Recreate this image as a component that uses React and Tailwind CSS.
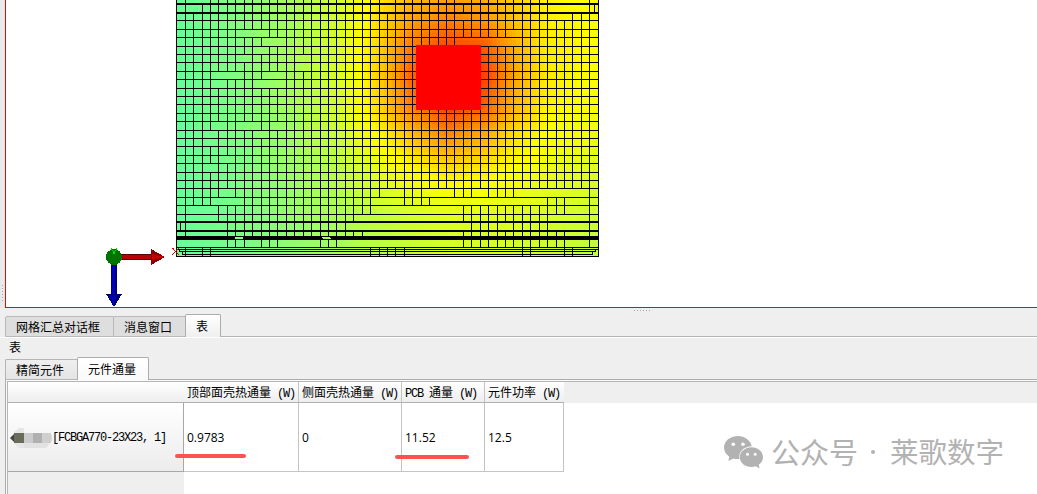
import React from "react";

const XS = [176, 185, 193, 202, 210, 218, 227, 235, 244, 252, 261, 269, 277, 286, 294, 303, 311, 320, 328, 336, 345, 353, 362, 370, 379, 387, 395, 404, 412, 421, 429, 438, 446, 454, 463, 471, 480, 488, 497, 505, 513, 522, 530, 539, 547, 556, 564, 572, 581, 589, 598];

const range = (a, b) => Array.from({ length: b - a + 1 }, (_, i) => a + i);
const without = (...gone) => range(1, 49).filter((i) => !gone.includes(i));

// Each band of the mesh: top, bottom, and the vertical grid lines it contains
const BANDS = [
  [0, 3, without(2, 3, 25, 34, 45, 46, 47, 48)],
  [4, 12, without(2, 25, 45, 46, 47, 48)],
  [13, 20, without(34, 45, 46)],
  [20, 29, without()],
  [29, 37, without(8, 9, 10, 40)],
  [37, 46, without(11, 12, 34, 35, 36, 37, 38, 39, 40)],
  [46, 54, without(10)],
  [54, 62, without(8, 15)],
  [62, 71, without(15)],
  [71, 79, without(5, 6, 7, 11, 12)],
  [79, 88, without(5, 10, 11, 12)],
  [88, 96, without()],
  [96, 104, without()],
  [104, 113, without()],
  [113, 121, without()],
  [121, 130, without(5, 8, 9, 12)],
  [130, 138, without(4, 10)],
  [138, 146, without(4)],
  [146, 155, without()],
  [155, 163, without(6)],
  [163, 172, without(4)],
  [172, 180, without()],
  [180, 188, without()],
  [188, 197, [...range(1, 5), ...range(7, 24), 27, 28, 29, 33, 34, 35, 37, 38, 39, 40, 49]],
  [197, 205, [...range(1, 4), ...range(8, 23), 27, 28, 29, 30, 44, 45, 46, 49]],
  [205, 214, [1, ...range(5, 23), ...range(34, 46), 49]],
  [214, 222, [1, ...range(5, 21), ...range(34, 44), 49]],
  [222, 231, [1, ...range(6, 20), 35, 36, 37, 38, 40, 41, 42, 43, 44, 49]],
  [231, 237, [1, ...range(6, 22), ...range(34, 46), 49]],
  [239, 247, [6, 7, 8, 10, 11, 12, 17, 18, 19, ...range(34, 46), 49]],
  [247, 256, [1, 3, 4, 23, 24, 25, 26, 27, 41, 42, 46, 47]],
];

const HLINES = [
  [3, 2], [12, 2], [20, 1], [29, 1], [37, 1], [46, 1], [54, 1], [62, 1], [71, 1], [79, 1], [88, 1], [96, 1], [104, 1], [113, 1], [121, 1],
  [130, 1], [138, 1], [146, 1], [155, 1], [163, 1], [172, 1], [180, 1], [188, 1], [197, 1], [205, 1], [214, 1], [221, 2], [230, 2], [236, 4], [247, 1], [256, 1],
];

// Sampled temperature field: 0 green, 1 yellow, 2 red
const FX = [176, 235, 290, 340, 362, 387, 410, 448, 485, 500, 520, 545, 598];
const FY = [0, 20, 45, 77, 110, 135, 180, 220, 257];
const FIELD = [
  [0, 0.18, 0.42, 0.72, 0.95, 1.15, 1.27, 1.37, 1.33, 1.25, 1.16, 1.04, 0.95],
  [0, 0.18, 0.42, 0.74, 0.98, 1.2, 1.36, 1.5, 1.4, 1.32, 1.21, 1.07, 0.97],
  [0, 0.17, 0.42, 0.77, 1, 1.26, 1.5, 1.72, 1.64, 1.46, 1.27, 1.08, 0.98],
  [0, 0.17, 0.42, 0.77, 1, 1.28, 1.6, 1.85, 1.75, 1.54, 1.3, 1.09, 0.97],
  [0, 0.16, 0.39, 0.74, 0.98, 1.22, 1.46, 1.75, 1.6, 1.42, 1.23, 1.05, 0.94],
  [0, 0.15, 0.37, 0.67, 0.9, 1.08, 1.24, 1.46, 1.32, 1.21, 1.1, 1, 0.88],
  [0, 0.13, 0.34, 0.54, 0.7, 0.83, 0.94, 1.03, 1.01, 0.98, 0.94, 0.86, 0.75],
  [0, 0.12, 0.3, 0.46, 0.55, 0.63, 0.7, 0.78, 0.8, 0.79, 0.77, 0.74, 0.68],
  [0, 0.1, 0.26, 0.41, 0.5, 0.56, 0.63, 0.69, 0.71, 0.71, 0.69, 0.66, 0.56],
];

function locate(list, v) {
  let i = 0;
  while (i < list.length - 2 && v > list[i + 1]) i++;
  return [i, Math.min(1, Math.max(0, (v - list[i]) / (list[i + 1] - list[i])))];
}

function heat(x, y) {
  const [i, u] = locate(FX, x);
  const [j, v] = locate(FY, y);
  const a = FIELD[j][i] * (1 - u) + FIELD[j][i + 1] * u;
  const b = FIELD[j + 1][i] * (1 - u) + FIELD[j + 1][i + 1] * u;
  const t = a * (1 - v) + b * v;
  if (t <= 1) return `rgb(${Math.round(100 + 155 * t)},255,${Math.round(155 - 155 * t)})`;
  return `rgb(255,${Math.round(255 * (2 - t))},0)`;
}

const TILES = [];
for (let y = 0; y < 257; y += 4) {
  for (let x = 176; x < 599; x += 4) {
    TILES.push([x, y, Math.min(4, 599 - x), Math.min(4, 257 - y), heat(x + 2, y + 2)]);
  }
}

function ThermalPlot() {
  return (
    <svg className="block" width="1031" height="307" viewBox="6 0 1031 307" shapeRendering="crispEdges">
      {TILES.map(([x, y, w, h, c]) => (
        <rect key={`${x}-${y}`} x={x} y={y} width={w} height={h} fill={c} />
      ))}
      <g fill="#000">
        {HLINES.map(([y, h]) => (
          <rect key={y} x="176" y={y} width="423" height={h} />
        ))}
        {BANDS.map(([y0, y1, lines]) =>
          lines.map((i) => <rect key={`${y0}-${i}`} x={XS[i]} y={y0} width="1" height={y1 - y0} />)
        )}
        <rect x="176" y="0" width="1" height="257" />
        <rect x="598" y="0" width="1" height="257" />
        <rect x="594" y="4" width="1" height="9" />
        <rect x="180" y="222" width="1" height="9" />
        <rect x="177" y="249" width="421" height="1" />
        <rect x="179" y="251" width="416" height="1" />
        <rect x="182" y="254" width="410" height="1" />
        <rect x="179" y="249" width="1" height="3" />
        <rect x="182" y="251" width="1" height="4" />
        <rect x="595" y="249" width="1" height="3" />
        <rect x="592" y="251" width="1" height="4" />
      </g>
      <rect x="235" y="237" width="8" height="2" fill="#85ff7c" />
      <path d="M322 237h8v1h1v1h-8v-1h-1z" fill="#a4ff5a" />
      <rect x="416" y="45" width="65" height="65" fill="#f00" />

      <g>
        <rect x="120" y="254" width="32" height="6" fill="#5d0000" />
        <rect x="120" y="255" width="32" height="4" fill="#b80000" />
        <path d="M151 249l14 8-14 8z" fill="#8b0000" />
        <path d="M152 254l13 3-13 3z" fill="#c30000" />
        <rect x="111" y="263" width="6" height="32" fill="#00006e" />
        <rect x="112" y="263" width="3" height="32" fill="#0000c0" />
        <path d="M106 294h16l-8 13z" fill="#00006e" />
        <path d="M109 295h8l-3 12z" fill="#0000b4" />
        <circle cx="114" cy="257" r="8" fill="#007300" />
        <g fill="#00d800">
          <path d="M111 248h1v2h-1zM112 250h1v1h-1zM113 251h2v3h-2zM115 250h1v1h-1zM116 248h1v2h-1z" />
        </g>
        <path
          d="M172 248h2v1h-2zM178 248h1v1h-1zM173 249h1v1h-1zM177 249h1v1h-1zM174 250h1v1h-1zM176 250h1v1h-1zM175 251h1v1h-1zM174 252h1v1h-1zM176 252h1v1h-1zM173 253h1v1h-1zM177 253h1v1h-1zM172 254h1v1h-1zM178 254h1v1h-1z"
          fill="#e00000"
        />
      </g>
    </svg>
  );
}

function Mono({ children }) {
  return <span className="font-['Liberation_Mono',monospace] text-[12px] tracking-[-1.2px] whitespace-pre">{children}</span>;
}

function Head({ className, label, prefix = "" }) {
  return (
    <div className={`flex h-full items-center border-r pt-[2px] pl-[3px] ${className}`}>
      <span className="whitespace-pre">
        <Mono>{prefix}</Mono>
        {label}
        <Mono>{" (W)"}</Mono>
      </span>
    </div>
  );
}

function Cell({ className, children }) {
  return (
    <div className={`flex h-full items-center border-r border-b border-[#c4c4c4] pt-[2px] pl-[3px] font-['Open_Sans',sans-serif] text-[12px] ${className}`}>
      {children}
    </div>
  );
}

function WeChatIcon() {
  return (
    <svg className="mt-[1px] block shrink-0" width="40" height="33" viewBox="0 0 40 33">
      <path fill="#b2b2b2" d="M14 0C6.300 0 0 5.100 0 11.600c0 3.700 2.100 7 5.300 9.100L4.400 25l4.900-2.600c1.900.6 4 .8 6.200.6C14 16 19.500 10.500 27.700 10.200 26.500 4.300 20.800 0 14 0z" />
      <path fill="#b2b2b2" d="M27.500 11.300c-6.500 0-11.700 4.400-11.700 9.900s5.200 9.800 11.700 9.800c1.600 0 3-.2 4.300-.7l3.700 2.200-.8-3.700c2.700-1.800 4.300-4.500 4.300-7.600 0-5.500-5-9.900-11.500-9.900z" />
      <g fill="#fff">
        <circle cx="9.300" cy="8.300" r="1.800" />
        <circle cx="19" cy="8.300" r="1.800" />
        <circle cx="23.500" cy="18.200" r="1.500" />
        <circle cx="31.200" cy="18.200" r="1.500" />
      </g>
    </svg>
  );
}

export default function App() {
  return (
    <div className="relative flex h-[494px] w-[1037px] flex-col overflow-hidden bg-[#efefef] font-['Noto_Sans_CJK_SC',sans-serif] text-[12px] leading-[16px] text-black">
      <div className="flex h-[308px] shrink-0">
        <div className="flex w-[5px] items-end bg-gradient-to-r from-[#e7e7e7] to-[#efefef] pb-[7px] pl-[2px]">
          <div className="flex flex-col gap-[2px]">
            {range(1, 6).map((i) => (
              <i key={i} className="size-px bg-[#a8a8a8]" />
            ))}
          </div>
        </div>
        <div className="w-[1032px] border-b border-l border-[#ff0000] bg-white">
          <ThermalPlot />
        </div>
      </div>

      <div className="flex h-[6px] shrink-0 gap-[2px] pt-[2px] pl-[634px]">
        {range(1, 6).map((i) => (
          <i key={i} className="size-px bg-[#a8a8a8]" />
        ))}
      </div>

      <div className="flex h-[23px] shrink-0 items-end pl-[5px]">
        <div className="flex h-[21px] w-[109px] items-center rounded-tl-[2px] border border-[#b9b9b9] bg-[#dedede] pl-[10px]">网格汇总对话框</div>
        <div className="flex h-[21px] w-[71px] items-center border-t border-b border-[#b9b9b9] bg-[#dedede] pl-[10px]">消息窗口</div>
        <div className="flex h-[23px] w-[36px] items-center rounded-t-[2px] border border-b-0 border-[#acacac] bg-gradient-to-b from-white to-[#efefef] pl-[10px]">表</div>
        <div className="h-px flex-1 bg-[#b5b5b5]" />
      </div>
      <div className="flex h-[20px] shrink-0 items-center border-t border-white pb-[2px] pl-[9px]">表</div>

      <div className="flex h-[23px] shrink-0 items-end pl-[5px]">
        <div className="flex h-[21px] w-[72px] items-center rounded-tl-[2px] border border-r-0 border-[#b5b5b5] bg-gradient-to-b from-[#efefef] to-[#e4e4e4] pl-[10px]">精简元件</div>
        <div className="flex h-[23px] w-[72px] items-center rounded-t-[2px] border border-b-0 border-[#acacac] bg-gradient-to-b from-white to-[#fafafa] pl-[10px]">元件通量</div>
        <div className="h-px flex-1 bg-[#acacac]" />
      </div>

      <div className="ml-[5px] flex flex-1 flex-col border-l border-[#acacac] bg-[#fafafa] pt-[1px] pl-[1px]">
        <div className="flex flex-1 flex-col border-t border-l border-[#b5b5b5] bg-white">
          <div className="flex h-[21px] shrink-0 bg-[#efefef]">
            <div className="flex w-[556px] border-b border-[#b0b0b0] bg-gradient-to-b from-white to-[#eeeeee]">
              <div className="w-[176px]" />
              <Head className="w-[115px] border-[#c4c4c4]" label="顶部面壳热通量" />
              <Head className="w-[103px] border-[#c4c4c4]" label="侧面壳热通量" />
              <Head className="w-[83px] border-[#c4c4c4]" prefix="PCB " label="通量" />
              <Head className="w-[79px] border-transparent" label="元件功率" />
            </div>
          </div>
          <div className="flex h-[69px] shrink-0">
            <div className="flex h-full w-[176px] items-center border-r border-b border-[#a8a8a8] bg-gradient-to-b from-white to-[#ececec] pt-[2px] pl-[2px]">
              <svg className="shrink-0" width="42" height="22" viewBox="0 0 42 22">
                <path d="M4 5l5-4h5v20H9l-5-5z" fill="#e6e6e6" />
                <path d="M14 15h27l-5 6H14z" fill="#e2e2e2" />
                <path d="M0 11l4-4v8z" fill="#444" />
                <g shapeRendering="crispEdges">
                  <rect x="4" y="6" width="10" height="10" fill="#696b5b" />
                  <rect x="14" y="6" width="9" height="10" fill="#cbcbcb" />
                  <rect x="23" y="6" width="9" height="10" fill="#b0b0b0" />
                  <rect x="32" y="6" width="9" height="10" fill="#cfcfcf" />
                  <rect x="41" y="8" width="1" height="6" fill="#d8d8d8" />
                </g>
              </svg>
              <Mono>[FCBGA770-23X23, 1]</Mono>
            </div>
            <Cell className="w-[115px]">0.9783</Cell>
            <Cell className="w-[103px]">0</Cell>
            <Cell className="w-[83px]">11.52</Cell>
            <Cell className="w-[79px]">12.5</Cell>
          </div>
          <div className="w-[176px] flex-1 bg-[#efefef]" />
        </div>
      </div>

      <div className="absolute top-[454px] left-[175px] h-[4px] w-[71px] rounded-full bg-[#fe5151]" />
      <div className="absolute top-[455px] left-[395px] h-[4px] w-[74px] rounded-full bg-[#fe5151]" />

      <div className="absolute top-[435px] left-[724px] flex h-[34px] text-[29px] leading-[32px] text-[#b2b2b2]">
        <WeChatIcon />
        <span className="ml-[7px] w-[88px]">公众号</span>
        <span className="flex w-[31px] items-center pl-[12px]">
          <i className="size-[4px] rounded-full bg-[#b2b2b2]" />
        </span>
        <span className="text-[28.500px] whitespace-nowrap">莱歌数字</span>
      </div>
    </div>
  );
}
